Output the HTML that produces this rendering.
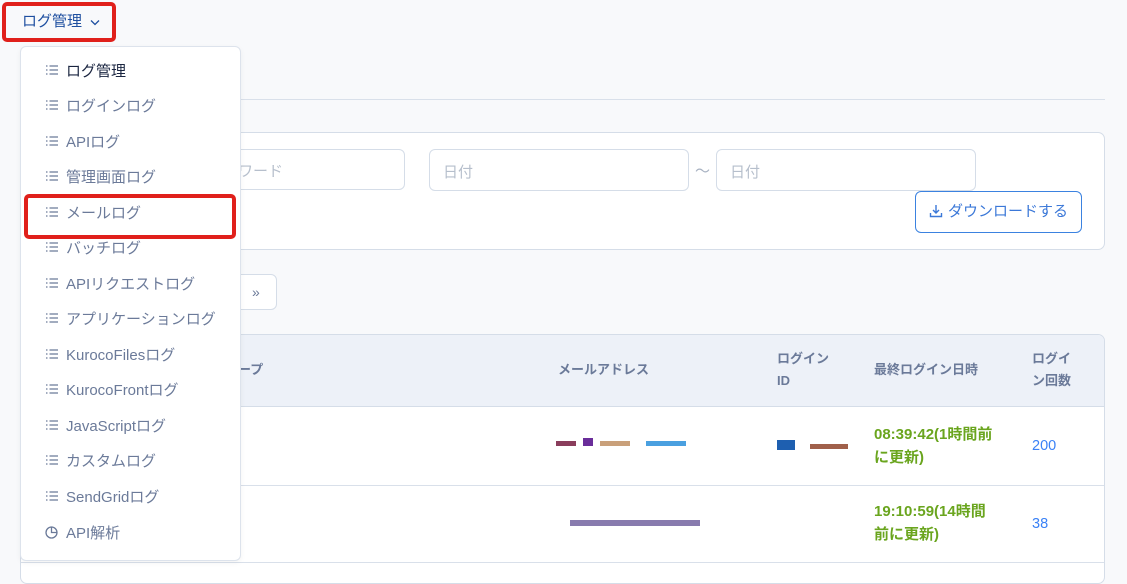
<!DOCTYPE html>
<html><head><meta charset="utf-8">
<style>
*{box-sizing:border-box;margin:0;padding:0}
body{width:1127px;height:575px;overflow:hidden;background:#f8f9fb;font-family:"Liberation Sans","Noto Sans CJK JP",sans-serif;position:relative;color:#6b7a99}
.a{position:absolute}
.inp{position:absolute;border:1px solid #d5dde8;border-radius:6px;background:#fff;font-size:15px;color:#b6bfcc;padding:11px 13px}
.mi{position:absolute;left:45px;font-size:15px;color:#6b7a99;height:20px;line-height:20px}
.mi i{display:inline-block;width:14px;margin-right:7px;font-style:normal}
.th{position:absolute;font-size:13px;font-weight:bold;color:#6b7a99;line-height:22px}
.g{position:absolute;font-size:15px;font-weight:bold;color:#6aa51e;line-height:23px}
.n{position:absolute;font-size:14.5px;color:#3b82f6}
.px{position:absolute;height:5px}
</style></head><body>
<svg width="0" height="0" style="position:absolute"><symbol id="ls" viewBox="0 0 14 12"><path d="M1 2h1.5M1 6h1.5M1 10h1.5M4.5 2H13M4.5 6H13M4.5 10H13" stroke="#6b7a99" stroke-width="1.2" fill="none"/></symbol></svg>
<div class="a" style="left:20px;top:99px;width:1085px;height:1px;background:#d9e0ea"></div>
<div class="a" style="left:20px;top:132px;width:1085px;height:118px;background:#fff;border:1px solid #d5dde8;border-radius:7px"></div>
<div class="inp" style="left:200px;top:149px;width:205px;height:41px"><span style="position:absolute;left:37px;top:10px">ワード</span></div>
<div class="inp" style="left:429px;top:149px;width:260px;height:42px">日付</div>
<div class="a" style="left:695px;top:160px;font-size:15px;color:#a8b2c2">〜</div>
<div class="inp" style="left:716px;top:149px;width:260px;height:42px">日付</div>
<div class="a" style="left:915px;top:191px;width:167px;height:42px;border:1px solid #3b82e0;border-radius:6px;background:#fff;color:#3b78d8;font-size:15px;line-height:40px;padding-left:13px">
<svg width="14" height="14" viewBox="0 0 14 14" style="vertical-align:-2px;margin-right:5px"><path d="M7 1v8M4 6l3 3 3-3M1.5 9v3.5h11V9" fill="none" stroke="#3b78d8" stroke-width="1.4"/></svg>ダウンロードする</div>
<div class="a" style="left:200px;top:274px;width:77px;height:36px;border:1px solid #d5dde8;border-radius:6px;background:#fff;color:#6b7a99;font-size:14px;line-height:34px;padding-left:51px">»</div>
<div class="a" style="left:20px;top:334px;width:1085px;height:250px;background:#fff;border:1px solid #d5dde8;border-radius:7px;overflow:hidden">
<div class="a" style="left:0;top:0;width:1085px;height:72px;background:#edf1f8;border-bottom:1px solid #d5dde8"></div>
<div class="a" style="left:0;top:150px;width:1085px;height:1px;background:#d9e0ea"></div>
<div class="a" style="left:0;top:227px;width:1085px;height:1px;background:#d9e0ea"></div>
</div>
<div class="th" style="left:238px;top:359px">ープ</div>
<div class="th" style="left:558px;top:359px">メールアドレス</div>
<div class="th" style="left:777px;top:348px">ログイン<br>ID</div>
<div class="th" style="left:874px;top:359px">最終ログイン日時</div>
<div class="th" style="left:1032px;top:348px">ログイ<br>ン回数</div>
<div class="g" style="left:874px;top:423px">08:39:42(1時間前<br>に更新)</div>
<div class="n" style="left:1032px;top:438px">200</div>
<div class="g" style="left:874px;top:500px">19:10:59(14時間<br>前に更新)</div>
<div class="n" style="left:1032px;top:516px">38</div>
<div class="px" style="left:556px;top:441px;width:20px;background:#8a3d5c"></div>
<div class="px" style="left:583px;top:438px;width:10px;height:8px;background:#6a2d9a"></div>
<div class="px" style="left:600px;top:441px;width:30px;background:#c9a07a"></div>
<div class="px" style="left:646px;top:441px;width:40px;background:#4aa0e0"></div>
<div class="px" style="left:777px;top:440px;width:18px;height:10px;background:#1e5fb0"></div>
<div class="px" style="left:810px;top:444px;width:38px;background:#a0604a"></div>
<div class="px" style="left:570px;top:520px;width:130px;height:6px;background:#6a5a9a;opacity:.8"></div>
<div class="a" style="left:20px;top:46px;width:221px;height:515px;background:#fff;border:1px solid #dde3ec;border-radius:6px;box-shadow:0 2px 6px rgba(0,0,0,.05)"></div>
<div class="mi" style="top:62px;color:#1a2540"><i><svg width="14" height="12"><use href="#ls"/></svg></i>ログ管理</div>
<div class="mi" style="top:97px"><i><svg width="14" height="12"><use href="#ls"/></svg></i>ログインログ</div>
<div class="mi" style="top:133px"><i><svg width="14" height="12"><use href="#ls"/></svg></i>APIログ</div>
<div class="mi" style="top:168px"><i><svg width="14" height="12"><use href="#ls"/></svg></i>管理画面ログ</div>
<div class="mi" style="top:204px"><i><svg width="14" height="12"><use href="#ls"/></svg></i>メールログ</div>
<div class="mi" style="top:239px"><i><svg width="14" height="12"><use href="#ls"/></svg></i>バッチログ</div>
<div class="mi" style="top:275px"><i><svg width="14" height="12"><use href="#ls"/></svg></i>APIリクエストログ</div>
<div class="mi" style="top:310px"><i><svg width="14" height="12"><use href="#ls"/></svg></i>アプリケーションログ</div>
<div class="mi" style="top:346px"><i><svg width="14" height="12"><use href="#ls"/></svg></i>KurocoFilesログ</div>
<div class="mi" style="top:381px"><i><svg width="14" height="12"><use href="#ls"/></svg></i>KurocoFrontログ</div>
<div class="mi" style="top:417px"><i><svg width="14" height="12"><use href="#ls"/></svg></i>JavaScriptログ</div>
<div class="mi" style="top:452px"><i><svg width="14" height="12"><use href="#ls"/></svg></i>カスタムログ</div>
<div class="mi" style="top:488px"><i><svg width="14" height="12"><use href="#ls"/></svg></i>SendGridログ</div>
<div class="mi" style="top:524px"><i><svg width="13" height="13" viewBox="0 0 13 13" style="vertical-align:-1px"><circle cx="6.5" cy="6.5" r="5.5" fill="none" stroke="#6b7a99" stroke-width="1.3"/><path d="M6.5 1v5.5H12" fill="none" stroke="#6b7a99" stroke-width="1.3"/></svg></i>API解析</div>
<div class="a" style="left:22px;top:12px;font-size:15px;color:#1e4fa0;line-height:20px">ログ管理</div>
<svg class="a" style="left:90px;top:19px" width="10" height="7" viewBox="0 0 10 7"><path d="M1 1.5l4 4 4-4" fill="none" stroke="#1e4fa0" stroke-width="1.3"/></svg>
<div class="a" style="left:2px;top:2px;width:114px;height:40px;border:4px solid #e0201b;border-radius:5px"></div>
<div class="a" style="left:24px;top:194px;width:212px;height:45px;border:4px solid #e0201b;border-radius:5px"></div>
</body></html>
